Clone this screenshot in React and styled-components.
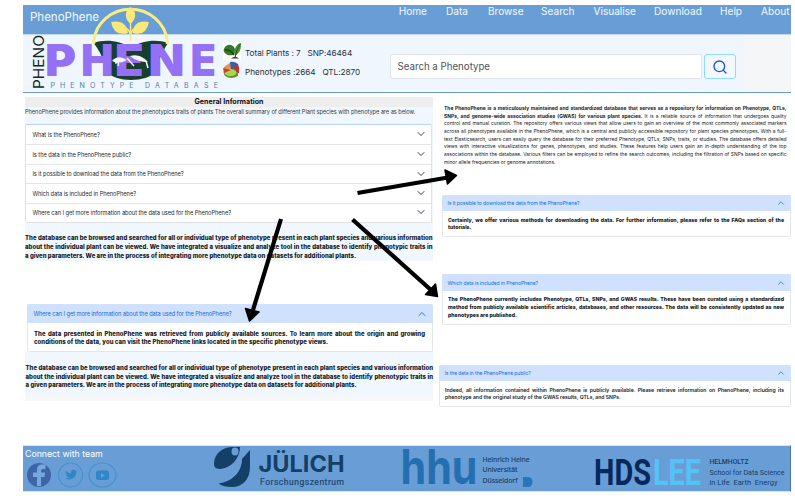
import React from "react";
import styled, { createGlobalStyle } from "styled-components";
import { Search, ChevronDown, ChevronUp } from "lucide-react";

const GlobalStyle = createGlobalStyle`
  * { box-sizing: border-box; }
  body { margin: 0; background: #fff; overflow: hidden; }
`;

const Page = styled.div`
  position: relative;
  width: 795px;
  height: 498px;
  padding: 5px 4px 0 23px;
  overflow: hidden;
  background: #fff;
  font-family: Inter, "Liberation Sans", sans-serif;
  color: #212529;
`;

const NavBar = styled.nav`
  display: flex;
  align-items: flex-start;
  height: 30px;
  background: #689ed5;
  border-bottom: 1px solid #c3d9ee;
  color: #f4f9ff;
  overflow: hidden;
`;

const Brand = styled.span`
  width: 370px;
  padding-left: 7px;
  font-size: 11.5px;
  line-height: 25px;
`;

const NavLinks = styled.div`
  display: flex;
  gap: 20px;
  padding-left: 7.8px;
`;

const NavLink = styled.a`
  flex: none;
  width: ${(p) => p.$w}px;
  font-size: 10.1px;
  line-height: 12px;
  white-space: nowrap;
`;

const Header = styled.header`
  height: 58px;
  background: #f5f6f7;
  border-bottom: 1px solid #6a9cc9;
`;

const HeaderPanel = styled.div`
  display: flex;
  width: 720px;
  height: 57px;
  background: #eff6fe;
`;

const Stats = styled.div`
  width: 167px;
  margin-left: 200px;
  padding-top: 6px;
`;

const StatRow = styled.div`
  display: flex;
  align-items: center;
  height: 19px;
  gap: 4px;
  font-size: 8.2px;
  white-space: pre;
  color: #2b3036;
  svg { flex: none; }
`;

const StatText = styled.span`
  padding-top: 4px;
  letter-spacing: -0.04px;
`;

const SearchForm = styled.div`
  display: flex;
  gap: 2px;
  padding-top: 19px;
`;

const SearchBox = styled.div`
  width: 312px;
  height: 25px;
  padding-left: 6.5px;
  border: 1px solid #dfe4ea;
  border-radius: 3px 0 0 3px;
  background: #fff;
  font-size: 9.7px;
  line-height: 24px;
  color: #4d5359;
`;

const SearchButton = styled.button`
  display: flex;
  align-items: center;
  justify-content: center;
  width: 32px;
  height: 25px;
  padding: 0;
  border: 1px solid #8edcf7;
  border-radius: 3px;
  background: #f2f8fe;
  color: #1f4fe0;
`;

const Columns = styled.main`
  display: flex;
  height: 352px;
`;

const LeftColumn = styled.div`
  width: 410px;
  padding: 4px 0 0 2px;
`;

const RightColumn = styled.div`
  width: 358px;
  padding-left: 6px;
`;

const SectionTitle = styled.h1`
  height: 10px;
  margin: 0;
  background: #eee;
  text-align: center;
  font-size: 7.1px;
  font-weight: 700;
  line-height: 9px;
  color: #111;
`;

const BluePanel = styled.section`
  height: ${(p) => p.$h}px;
  background: #f0f7fe;
`;

const Intro = styled.p`
  height: 17px;
  margin: 0;
  font-size: 5.7px;
  letter-spacing: -0.064px;
  line-height: 9px;
  white-space: nowrap;
  color: #343a40;
`;

const FaqList = styled.div`
  width: 407px;
  border: 1px solid #dfe3e8;
  border-top-color: #b9d3f8;
  border-radius: 2px;
  background: #fff;
`;

const FaqRow = styled.div`
  display: flex;
  align-items: center;
  justify-content: space-between;
  height: 19.4px;
  padding: 0 4px 0.6px 6.4px;
  font-size: 5.7px;
  letter-spacing: -0.06px;
  color: #24292e;
  white-space: nowrap;
  & + & { border-top: 1px solid #e3e6ea; }
`;

const Statement = styled.div`
  width: 407.5px;
  padding-top: ${(p) => p.$top}px;
  margin-left: ${(p) => p.$left || 0}px;
`;

const Line = styled.div`
  height: ${(p) => p.$h}px;
  line-height: ${(p) => p.$h}px;
  font-size: ${(p) => p.$size}px;
  font-weight: ${(p) => p.$weight || 400};
  letter-spacing: ${(p) => p.$ls || 0}px;
  white-space: nowrap;
  text-align: justify;
  text-align-last: ${(p) => (p.$last ? "left" : "justify")};
  color: #16191c;
  b { font-weight: 700; letter-spacing: 0.04px; }
`;

const OpenItem = styled.article`
  width: ${(p) => p.$w}px;
  height: ${(p) => p.$h}px;
  margin: ${(p) => p.$margin};
  border: 1px solid #e3e7ec;
  border-top: 0;
  border-radius: 2px;
  background: #fff;
`;

const OpenHeader = styled.div`
  display: flex;
  align-items: center;
  justify-content: space-between;
  height: ${(p) => p.$h}px;
  margin: 0 -1px;
  padding: 0 5px 0 ${(p) => p.$pad}px;
  border-radius: 2px 2px 0 0;
  background: #cfe1fc;
  font-size: ${(p) => p.$size}px;
  letter-spacing: -0.068px;
  color: #1769d8;
  white-space: nowrap;
`;

const OpenBody = styled.div`
  padding: ${(p) => p.$pad};
`;

const About = styled.div`
  width: 342.5px;
  margin-left: 5px;
  padding-top: 12px;
  height: 102px;
`;

const BelowPanel = styled.div`
  height: 6px;
  background: #f6f7f8;
`;

const Footer = styled.footer`
  display: flex;
  height: 47px;
  border: solid #d6e6f5;
  border-width: 1px 0;
  border-right: 1px solid #47759f;
  background: #689ed5;
`;

const Social = styled.div`
  width: 190px;
  padding: 1.5px 0 0 2px;
  color: #fff;
  font-size: 8.75px;
  line-height: 13px;
`;

const SocialIcons = styled.div`
  display: flex;
`;

const LogoLayer = styled.svg`
  position: absolute;
  left: 23px;
  top: 0;
`;

const PartnerStrip = styled.svg`
  overflow: visible;
`;

const ArrowLayer = styled.svg`
  position: absolute;
  left: 0;
  top: 0;
  pointer-events: none;
`;

const links = [
  ["Home", 27.3], ["Data", 22], ["Browse", 33], ["Search", 32.5],
  ["Visualise", 40.5], ["Download", 46], ["Help", 21], ["About", 30],
];

const questions = [
  "What is the PhenoPhene?",
  "Is the data in the PhenoPhene public?",
  "Is it possible to download the data from the PhenoPhene?",
  "Which data is included in PhenoPhene?",
  "Where can I get more information about the data used for the PhenoPhene?",
];

const statement = [
  "The database can be browsed and searched for all or individual type of phenotype present in each plant species and various information",
  "about the individual plant can be viewed. We have integrated a visualize and analyze tool in the database to identify phenotypic traits in",
  "a given parameters. We are in the process of integrating more phenotype data on datasets for additional plants.",
];

const about = [
  <b>The PhenoPhene is a meticulously maintained and standardized database that serves as a repository for information on Phenotype, QTLs,</b>,
  <><b>SNPs, and genome-wide association studies (GWAS) for various plant species.</b> It is a reliable source of information that undergoes quality</>,
  "control and manual curation. The repository offers various views that allow users to gain an overview of the most commonly associated markers",
  "across all phenotypes available in the PhenoPhene, which is a central and publicly accessible repository for plant species phenotypes. With a full-",
  "text Elasticsearch, users can easily query the database for their preferred Phenotype, QTLs, SNPs, traits, or studies. The database offers detailed",
  "views with interactive visualizations for genes, phenotypes, and studies. These features help users gain an in-depth understanding of the top",
  "associations within the database. Various filters can be employed to refine the search outcomes, including the filtration of SNPs based on specific",
  "minor allele frequencies or genome annotations.",
];

function Lines({ items, ...rest }) {
  return items.map((t, i) => (
    <Line key={i} $last={i === items.length - 1} {...rest}>{t}</Line>
  ));
}

function PlantIcon() {
  return (
    <svg width="18" height="18" viewBox="0 0 18 18">
      <rect width="18" height="18" fill="#fff" />
      <path d="M0.5 8C2 3 7 1 11 5C13 8 12 12 10 13C5 14 1 12 .5 8Z" fill="#35782b" />
      <path d="M2 8Q7 7 11 13" stroke="#163f19" strokeWidth="1.4" fill="none" />
      <path d="M12 14C10 8 13 2 18 1C18 7 17 11 12 14Z" fill="#4d8d34" />
      <path d="M17 2Q13 8 12 16" stroke="#2a5420" fill="none" />
      <path d="M8 16.5Q12 13 16 16.5Z" fill="#4b3322" />
    </svg>
  );
}

function PieIcon() {
  return (
    <svg width="18" height="18" viewBox="0 0 18 18">
      <path d="M1 6L8 1V9L1 10Z" fill="#e7925b" />
      <path d="M7 1Q11 0 15 3V8L8 8Z" fill="#355fa5" />
      <path d="M9 8L15 3Q17 7 16 12L12 13Z" fill="#b93338" />
      <path d="M1 10Q0 12 2 15Q8 19 15 15V11Z" fill="#659530" />
      <ellipse cx="7.5" cy="11.5" rx="6" ry="3.5" fill="#a8d64f" />
      <path d="M0 7L8 9L1 12Z" fill="#c64438" />
    </svg>
  );
}

const wordmark = [["P", 45, 31], ["H", 81, 32.5], ["E", 114.8, 29], ["N", 148.5, 36], ["E", 190.5, 25.5]];

function PhenoLogo() {
  return (
    <LogoLayer width="200" height="96" viewBox="23 0 200 96">
      <path d="M93.500 43C104 39 120 40 130.500 48C142 40 157 39 168 43C163 51 158 60 156 72Q147 80 131 80Q115 80 107 72C104 60 100 51 93.500 43Z" fill="#173f2c" />
      <g fontFamily="Inter, sans-serif" fontWeight="900" fontSize="43.5" fill="#9470f4">
        {wordmark.map(([c, x, w]) => (
          <text key={x} x={x} y="75.7" textLength={w} lengthAdjust="spacingAndGlyphs">{c}</text>
        ))}
      </g>
      <path d="M112 61Q118 54 127 60Q119 65 112 61Z M130 56Q140 53 148 62Q137 62 130 56Z" fill="#f4f2fb" />
      <path d="M127 58L134 66M118 66Q120 61 115 63M146 61L148 68" fill="none" stroke="#f4f2fb" strokeWidth="1.500" />
      <path d="M93.700 44V41A37 35.500 0 0 1 167.300 41V44" fill="none" stroke="#f8ed80" strokeWidth="3" />
      <path d="M130.500 7Q140 15 130.500 24Q121 15 130.500 7Z M111 22Q126 19 128 33Q114 37 111 22Z M149 22Q134 19 132.500 33Q146 37 149 22Z" fill="#fae878" />
      <path d="M130.500 22V41M130.500 35Q129 28 123 27M130.500 35Q132 28 138 27" stroke="#fae878" strokeWidth="1.400" fill="none" />
      <text transform="translate(44.300 89) rotate(-90)" fontFamily="Inter, sans-serif" fontSize="14.800" fill="#142a26" textLength="54" lengthAdjust="spacingAndGlyphs">PHENO</text>
      <text y="87.500" fontFamily="Inter, sans-serif" fontSize="7" fill="#4f7fac">
        <tspan x="50.500" textLength="83">PHENOTYPE</tspan>
        <tspan x="145" textLength="73">DATABASE</tspan>
      </text>
    </LogoLayer>
  );
}

function SocialBadges() {
  return (
    <svg width="96" height="27" viewBox="25 461 96 27">
      <circle cx="39" cy="475" r="12" fill="#3e65a8" />
      <path d="M37 486V477H33V472.500H37V470Q37 464.500 42 464.500H45.500V469H43Q41 469 41 471V472.500H45L44.500 477H41V486Z" fill="#76a8db" />
      <g fill="none" stroke="#4392cf" strokeWidth="1.100">
        <circle cx="70.500" cy="475" r="12" />
        <ellipse cx="102.500" cy="475" rx="13.500" ry="12" />
      </g>
      <path d="M65.500 470.500Q68 473.500 71 473.200C70 470 74 468.500 75.500 471L77 470.300L76.200 472.200C76.500 478 70 481 65 478.500Q68 478.500 69 477.300Q66.500 477 66 475.300L67 475.200Q65 474 65.500 470.500Z" fill="#2f87c8" />
      <rect x="96" y="470.500" width="13" height="9.500" rx="2.500" fill="#2f87c8" />
      <path d="M101 473V477.700L105 475.300Z" fill="#689ed5" />
    </svg>
  );
}

function PartnerLogos() {
  return (
    <PartnerStrip width="577" height="45" viewBox="213 446 577 45">
      <path d="M214 464C214 453 223 447 233 447H240C240 456 234 465 225 468Q214 471 214 464Z" fill="#133f68" />
      <path d="M242 459L250 450V467C250 480 242 487 232 487Q223 487 218.500 483.500C232 482 242 472 242 459Z" fill="#133f68" />
      <ellipse cx="235" cy="451.500" rx="3.500" ry="4" fill="#689ed5" />
      <text x="258.500" y="472" fontFamily="Inter, sans-serif" fontWeight="700" fontSize="22.500" fill="#133f68" textLength="86" lengthAdjust="spacingAndGlyphs">JÜLICH</text>
      <text x="260" y="485" fontFamily="Roboto, sans-serif" fontSize="8.500" fill="#1d4971" stroke="#1d4971" strokeWidth="0.200" textLength="84">Forschungszentrum</text>
      <text x="400.500" y="483.500" fontFamily="Inter, sans-serif" fontWeight="700" fontSize="48" fill="#236fb0" textLength="77" lengthAdjust="spacingAndGlyphs">hhu</text>
      <g fontFamily="Noto Sans, sans-serif" fontSize="7.700" fill="#173f68" stroke="#173f68" strokeWidth="0.150">
        <text x="482.500" y="461.500" textLength="47" lengthAdjust="spacingAndGlyphs">Heinrich Heine</text>
        <text x="482.500" y="472" textLength="35" lengthAdjust="spacingAndGlyphs">Universität</text>
        <text x="482.500" y="482.500" textLength="35" lengthAdjust="spacingAndGlyphs">Düsseldorf</text>
      </g>
      <path d="M523 477H529Q532.500 478 532.500 482Q532 486.500 529 487H523Z" fill="#2676b9" />
      <text x="594" y="485" fontFamily="Roboto, sans-serif" fontWeight="700" fontSize="37" fill="#05295c" textLength="57" lengthAdjust="spacingAndGlyphs">HDS</text>
      <text x="653" y="485" fontFamily="Roboto, sans-serif" fontWeight="700" fontSize="37" fill="#54c2f6" textLength="48" lengthAdjust="spacingAndGlyphs">LEE</text>
      <g fontFamily="Roboto, sans-serif" fontSize="8" fill="#173f68">
        <text x="709.500" y="464" fontWeight="500" textLength="39" lengthAdjust="spacingAndGlyphs">HELMHOLTZ</text>
        <text x="709.500" y="474.700" textLength="75" lengthAdjust="spacingAndGlyphs">School for Data Science</text>
        <text x="709.500" y="485" textLength="68" lengthAdjust="spacingAndGlyphs">{"in Life \u00a0Earth \u00a0Energy"}</text>
      </g>
    </PartnerStrip>
  );
}

function Arrows() {
  return (
    <ArrowLayer width="795" height="498" viewBox="0 0 795 498">
      <g stroke="#000" strokeWidth="4.200">
        <path d="M357.500 193L448 177.500M281 219L253 310M352.500 219.500L431 290" />
      </g>
      <g fill="#000" stroke="#000" strokeWidth="1.500" strokeLinejoin="round">
        <path d="M445 170L456.500 175.500L447.500 184Z" />
        <path d="M245.500 308.500L259 312L249.500 321Z" />
        <path d="M435.500 284L437.500 296.500L425.500 294.500Z" />
      </g>
    </ArrowLayer>
  );
}

export default function App() {
  return (
    <Page>
      <GlobalStyle />
      <NavBar>
        <Brand>PhenoPhene</Brand>
        <NavLinks>
          {links.map(([t, w]) => <NavLink key={t} $w={w}>{t}</NavLink>)}
        </NavLinks>
      </NavBar>
      <Header>
        <HeaderPanel>
          <Stats>
            <StatRow><PlantIcon /><StatText>Total Plants : 7   SNP:46464</StatText></StatRow>
            <StatRow><PieIcon /><StatText>Phenotypes :2664   QTL:2870</StatText></StatRow>
          </Stats>
          <SearchForm>
            <SearchBox>Search a Phenotype</SearchBox>
            <SearchButton aria-label="Search"><Search size={16} strokeWidth={2} /></SearchButton>
          </SearchForm>
        </HeaderPanel>
      </Header>
      <Columns>
        <LeftColumn>
          <SectionTitle>General Information</SectionTitle>
          <BluePanel $h={154}>
            <Intro>PhenoPhene provides information about the phenotypics traits of plants The overall summary of different Plant species with phenotype are as below.</Intro>
            <FaqList>
              {questions.map((q) => (
                <FaqRow key={q}>{q}<ChevronDown size={12} strokeWidth={1.800} /></FaqRow>
              ))}
            </FaqList>
            <Statement $top={11.3}><Lines items={statement} $h={8.8} $size={6} $weight={800} $ls={0.02} /></Statement>
          </BluePanel>
          <OpenItem $w={406} $h={48} $margin="43px 0 0 2px">
            <OpenHeader $h={19} $pad={6.5} $size={5.7}>
              Where can I get more information about the data used for the PhenoPhene?
              <ChevronUp size={12} strokeWidth={1.800} />
            </OpenHeader>
            <OpenBody $pad="6.6px 7px 0 6px">
              <Lines $h={8.8} $size={6} $weight={800} $ls={0.02} items={[
                "The data presented in PhenoPhene was retrieved from publicly available sources. To learn more about the origin and growing",
                "conditions of the data, you can visit the PhenoPhene links located in the specific phenotype views.",
              ]} />
            </OpenBody>
          </OpenItem>
          <BluePanel $h={43}>
            <Statement $top={11.8} $left={0.5}><Lines items={statement} $h={8.8} $size={6} $weight={800} $ls={0.02} /></Statement>
          </BluePanel>
          <BelowPanel />
        </LeftColumn>
        <RightColumn>
          <About><Lines items={about} $h={7.7} $size={4.9} /></About>
          <OpenItem $w={349} $h={42} $margin="0 0 0 3px">
            <OpenHeader $h={16} $pad={5.5} $size={5}>
              Is it possible to download the data from the PhenoPhene?
              <ChevronUp size={10} strokeWidth={1.800} />
            </OpenHeader>
            <OpenBody $pad="5.8px 6px 0 5px">
              <Lines $h={7.7} $size={5.2} $weight={800} items={[
                "Certainly, we offer various methods for downloading the data. For further information, please refer to the FAQs section of the",
                "tutorials.",
              ]} />
            </OpenBody>
          </OpenItem>
          <OpenItem $w={349} $h={51} $margin="37px 0 0 3px">
            <OpenHeader $h={17} $pad={5.5} $size={5}>
              Which data is included in PhenoPhene?
              <ChevronUp size={10} strokeWidth={1.800} />
            </OpenHeader>
            <OpenBody $pad="5.3px 6px 0 5px">
              <Lines $h={7.7} $size={5.2} $weight={800} items={[
                "The PhenoPhene currently includes Phenotype, QTLs, SNPs, and GWAS results. These have been curated using a standardized",
                "method from publicly available scientific articles, databases, and other resources. The data will be consistently updated as new",
                "phenotypes are published.",
              ]} />
            </OpenBody>
          </OpenItem>
          <OpenItem $w={352} $h={42} $margin="40px 0 0 0">
            <OpenHeader $h={16} $pad={5.5} $size={5}>
              Is the data in the PhenoPhene public?
              <ChevronUp size={10} strokeWidth={1.800} />
            </OpenHeader>
            <OpenBody $pad="5.5px 6px 0 5px">
              <Lines $h={7.7} $size={5.1} $weight={600} items={[
                "Indeed, all information contained within PhenoPhene is publicly available. Please retrieve information on PhenoPhene, including its",
                "phenotype and the original study of the GWAS results, QTLs, and SNPs.",
              ]} />
            </OpenBody>
          </OpenItem>
        </RightColumn>
      </Columns>
      <Footer>
        <Social>
          Connect with team
          <SocialIcons><SocialBadges /></SocialIcons>
        </Social>
        <PartnerLogos />
      </Footer>
      <PhenoLogo />
      <Arrows />
    </Page>
  );
}
